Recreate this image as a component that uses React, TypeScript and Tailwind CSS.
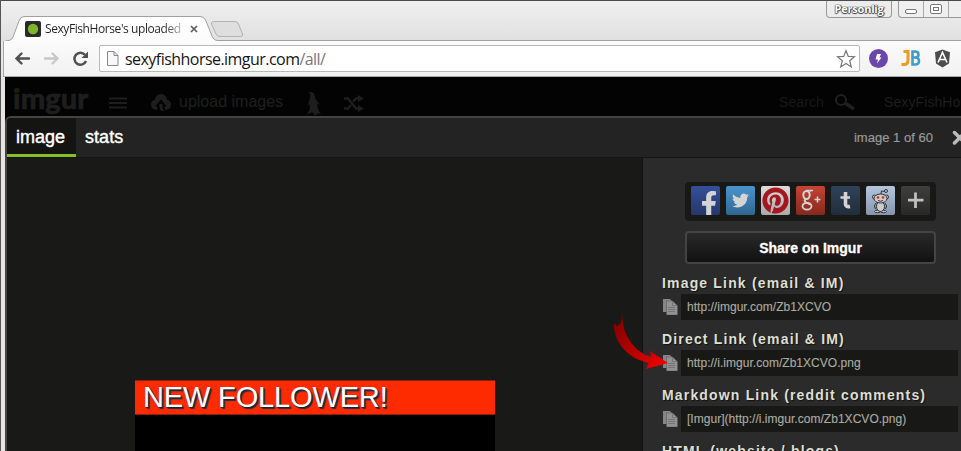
import React from "react";
import { FaFacebookF, FaTwitter, FaPinterest } from "react-icons/fa";

const arial = "font-['Liberation_Sans',Arial,sans-serif]";
const segoe = "font-['Open_Sans','Noto_Sans',sans-serif]";

function TabStrip() {
  return (
    <div className="relative h-[41px] shrink-0 bg-gradient-to-b from-[#f0f0f0] to-[#e0e0e0] border-t border-[#4d4a4d]">
      <svg className="absolute left-0 top-0" width="961" height="40" viewBox="0 1 961 40">
        <defs>
          <linearGradient id="tab" x1="0" y1="0" x2="0" y2="1">
            <stop offset="0" stopColor="#fff" />
            <stop offset="1" stopColor="#fbfbfb" />
          </linearGradient>
        </defs>
        <path d="M3.500 47V43Q4 40.500 8 40.500H9Q12 40 13 37L19 21Q20.500 16.500 24 16.500H200Q204 16.500 205.500 20L212 36Q213.500 40.500 218 40.500H965V47Z" fill="url(#tab)" stroke="#a0a0a0" />
        <path d="M215 21.500H235Q237.500 21.500 238.500 24L242.500 34Q243.500 36.500 240.500 36.500H220Q217 36.500 216 34L211.500 24Q210.700 21.500 215 21.500Z" fill="#dedede" stroke="#b2b2b2" />
        <rect x="25" y="21" width="16" height="16" rx="2" fill="#2a2a2a" />
        <circle cx="33" cy="29" r="5.200" fill="#7fb52a" />
        <path d="M191 26l6 6M197 26l-6 6" stroke="#5d5d5d" strokeWidth="1.700" />
      </svg>
      <div className={`absolute left-[45px] top-[19px] w-[138px] whitespace-nowrap bg-gradient-to-r from-[#222] from-85% to-[#ccc] bg-clip-text text-[12px] leading-[18px] tracking-[-0.42px] text-transparent ${segoe}`}>
        SexyFishHorse's uploaded
      </div>
      <div className="absolute right-0 top-0 flex h-[17px] gap-[6px]">
        <div className={`h-[17px] w-[66px] rounded-b-[4px] border border-t-0 border-[#999] bg-[#ececec] text-center text-[11px] font-bold leading-[16px] tracking-[-0.2px] text-white [text-shadow:0_0_1px_#333,0_0_1px_#333,0_1px_1px_#444,1px_0_1px_#444] ${segoe}`}>
          Personlig
        </div>
        <div className="flex w-[63px] rounded-bl-[4px] border-b border-l border-[#999] bg-[#efefef]">
          <svg width="62" height="16">
            <path d="M24.500 0v16M49.500 0v16" stroke="#aaa" />
            <rect x="6.500" y="8.500" width="11" height="4" rx="1.500" fill="#fff" stroke="#777" />
            <rect x="31.500" y="3.500" width="11" height="9" rx="1.500" fill="#fff" stroke="#777" />
            <rect x="34.500" y="6.500" width="5" height="3" fill="#fff" stroke="#777" />
          </svg>
        </div>
      </div>
    </div>
  );
}

function Toolbar() {
  return (
    <div className="ml-[3px] flex h-[36px] shrink-0 items-start border-b border-l border-b-[#aaa] border-l-[#a8a8a8] bg-gradient-to-b from-[#fbfbfb] to-[#f1f1f1] pt-[4px]">
      <svg className="shrink-0" width="95" height="28" viewBox="4 45 95 28" fill="none">
        <path d="M29 58.500H17M21.500 53.500L16.500 58.500L21.500 63.500" stroke="#505050" strokeWidth="2.400" strokeLinecap="round" />
        <path d="M45 58.500H57M52.500 53.500L57.500 58.500L52.500 63.500" stroke="#c8c8c8" strokeWidth="2.400" strokeLinecap="round" />
        <path d="M85 54.800A6 6 0 1 0 86 61" stroke="#505050" strokeWidth="2.500" />
        <path d="M88 51.500V58H81.500Z" fill="#505050" />
      </svg>
      <div className="flex h-[27px] w-[761px] shrink-0 items-center rounded-[2px] border border-[#b8b8b8] bg-white">
        <svg className="ml-[6px] shrink-0" width="14" height="17" viewBox="0 0 14 17">
          <path d="M1.500 1.500H8L12 5.500V15.500H1.500Z" fill="#f8f8f8" stroke="#888" />
          <path d="M8 1.500V5.500H12" fill="none" stroke="#888" />
        </svg>
        <div className={`ml-[5px] flex-1 whitespace-nowrap text-[16px] leading-[24px] tracking-[-0.54px] text-[#151515] ${segoe}`}>
          sexyfishhorse.imgur.com<span className="text-[#777]">/all/</span>
        </div>
        <svg className="mr-[3px]" width="20" height="20" viewBox="0 0 20 20">
          <path d="M10 1.500L12.300 7.400L18.500 7.700L13.700 11.700L15.300 18L10 14.500L4.700 18L6.300 11.700L1.500 7.700L7.700 7.400Z" fill="#fff" stroke="#777" strokeWidth="1.200" />
        </svg>
      </div>
      <svg className="shrink-0" width="101" height="28" viewBox="860 45 101 28">
        <circle cx="878.500" cy="58.500" r="9.500" fill="#6a47aa" />
        <path d="M877 54H881L879.500 57.500H881.500L877 63.500L878 59.500H875.500Z" fill="#fff" />
        <path d="M903.500 51.500H908V60Q908 64.500 904 64.500H901.500" fill="none" stroke="#ec9a20" strokeWidth="3" />
        <path d="M912.500 51.500H915Q918.500 51.500 918.500 54.500Q918.500 57.500 915 57.500H913.500H915.500Q919 57.500 919 61Q919 64.500 915 64.500H912.500Z" fill="none" stroke="#419ccc" strokeWidth="2.600" />
        <path d="M942.500 49.500L950 52.300L949 63.500L942.500 67.500L936 63.500L935 52.300Z" fill="#4c4c4c" />
        <path d="M938 62.500L942.500 52.500L947 62.500M939.800 59.500H945.200" fill="none" stroke="#fff" strokeWidth="1.600" />
      </svg>
    </div>
  );
}

function SiteHeader() {
  return (
    <div className={`flex h-[39px] shrink-0 overflow-hidden bg-[#030303] text-[#1e1e1e] ${arial}`}>
      <div className="relative ml-[8px] mt-[4px] w-[90px] shrink-0 font-['Lato',sans-serif] text-[29px] font-black leading-[34px] tracking-[0.1px] [-webkit-text-stroke:0.6px_#1e1e1e]">
        imgur
        <span className="absolute left-[1px] top-[7px] size-[5px] rounded-full bg-[#172002]" />
      </div>
      <svg className="shrink-0" width="72" height="39" viewBox="103 77 72 39" fill="#1e1e1e">
        <path d="M109 97.500H127V99.500H109ZM109 102H127V104H109ZM109 106.500H127V108.500H109Z" />
        <path d="M157 110Q151 109.500 151 104.500Q151 101 155 99.500Q156 94 161 94Q166 94 167 99.500Q171 101 171 104.500Q171 109.500 165 110L164.500 106.500H167L161 99.500L155 106.500H157.500Z" />
        <path d="M159.500 104H162.500V107Q162.500 110 165 111H161.500Q159.500 110 159.500 107Z" />
      </svg>
      <div className="mt-[15px] w-[126px] shrink-0 whitespace-nowrap pl-[4px] text-[16px] leading-[20px] [-webkit-text-stroke:0.2px_#1e1e1e]">upload images</div>
      <svg className="shrink-0" width="67" height="39" viewBox="301 77 67 39">
        <path d="M308 92.500L312 92L314.500 94L315 98L317 101L320 104.500L317 103.500L318 109L321 114.500L318 113L316.500 115H313L314.500 113L311 112.500L306.500 115L310 109L309.500 104L307.500 106L310 98L310.500 94Z" fill="#1e1e1e" />
        <path d="M344 98.500H348L356 108.500H359M344 108.500H348L351 105M353 101.500L356 98.500H359" fill="none" stroke="#1e1e1e" strokeWidth="2.500" />
        <path d="M358 95L364 98.500L358 102ZM358 105L364 108.500L358 112Z" fill="#1e1e1e" />
      </svg>
      <div className="ml-auto mt-[16px] text-[14px] leading-[18px] tracking-[0.1px] text-[#181818]">Search</div>
      <svg className="ml-[9px] shrink-0" width="28" height="39" viewBox="833 77 28 39">
        <circle cx="841" cy="100" r="5" fill="none" stroke="#202020" strokeWidth="2" />
        <path d="M845 103L854 109" stroke="#202020" strokeWidth="3.500" />
      </svg>
      <div className="ml-[23px] mt-[16px] w-[77px] shrink-0 whitespace-nowrap text-[14px] leading-[18px] tracking-[0.1px]">SexyFishHo</div>
    </div>
  );
}

function ShareIcons() {
  const tile = "flex size-[29px] items-center justify-center overflow-hidden rounded-[2px] text-[#d4d4d4]";
  return (
    <div className="flex h-[39px] w-[251px] gap-[6px] rounded-[4px] bg-[#181817] px-[6px] pt-[4px]">
      <div className={`${tile} items-end bg-gradient-to-b from-[#35509a] to-[#25376b] pl-[7px]`}><FaFacebookF size={26} className="translate-y-[2px]" /></div>
      <div className={`${tile} bg-gradient-to-b from-[#4a94cf] to-[#306792]`}><FaTwitter size={17} /></div>
      <div className={`${tile} bg-gradient-to-b from-[#ddd] to-[#aaa]`}><FaPinterest size={27} className="text-[#a31820]" /></div>
      <div className={`${tile} bg-gradient-to-b from-[#c74433] to-[#86281d]`}>
        <svg width="29" height="29" viewBox="0 0 29 29" fill="none" stroke="#d4d4d4">
          <ellipse cx="10.500" cy="9" rx="3.200" ry="4" strokeWidth="2" />
          <path d="M10 4.500H17M14 5.500L15 4.500" strokeWidth="1.300" />
          <path d="M10 13Q7.500 14.500 9.500 16L14 18.500" strokeWidth="2" />
          <ellipse cx="11" cy="20.200" rx="4.500" ry="3.400" strokeWidth="1.800" />
          <path d="M21.500 10.500V16.500M18.500 13.500H24.500" strokeWidth="1.600" />
        </svg>
      </div>
      <div className={`${tile} bg-gradient-to-b from-[#304359] to-[#202d3c]`}>
        <svg width="29" height="29" viewBox="0 0 29 29" fill="none" stroke="#d4d4d4">
          <path d="M14.500 6V18Q14.500 21.300 19 20.500" strokeWidth="3.600" />
          <path d="M9.500 11.500H19" strokeWidth="2.600" />
        </svg>
      </div>
      <div className={`${tile} bg-gradient-to-b from-[#b3c5df] to-[#8796ad]`}>
        <svg width="29" height="29" viewBox="0 0 29 29" fill="#ccc" stroke="#333" strokeWidth="1">
          <path d="M14.500 10L15.500 5L19.500 5.500" fill="none" />
          <circle cx="20" cy="5" r="1.500" />
          <circle cx="8.500" cy="11" r="2" /><circle cx="20.500" cy="11" r="2" />
          <path d="M10 17Q7 20 9.500 23M19 17Q22 20 19.500 23" fill="none" />
          <ellipse cx="11.500" cy="25.500" rx="3" ry="1.200" /><ellipse cx="17.500" cy="25.500" rx="3" ry="1.200" />
          <ellipse cx="14.500" cy="20.500" rx="4" ry="5" />
          <ellipse cx="14.500" cy="12.500" rx="6.500" ry="4.500" />
          <circle cx="12" cy="11.500" r="1.300" fill="#d22f20" stroke="none" /><circle cx="17" cy="11.500" r="1.300" fill="#d22f20" stroke="none" />
          <path d="M12 14.500Q14.500 16 17 14.500" fill="none" />
        </svg>
      </div>
      <div className={`${tile} bg-gradient-to-b from-[#3e3e3c] to-[#292928]`}>
        <svg width="29" height="29"><path d="M14.500 6.500V22M7 14.200H22.500" stroke="#c0c0c0" strokeWidth="2.800" /></svg>
      </div>
    </div>
  );
}

function CopyIcon() {
  return (
    <svg className="ml-px shrink-0" width="18" height="16" viewBox="0 0 18 16">
      <path d="M0 0H7L10 3V13H0Z" fill="#858585" />
      <path d="M3.500 2H9.500L14.500 6.500V16H3.500Z" fill="#929292" stroke="#555" strokeWidth="0.500" />
      <path d="M9.500 2.500V6.500H14" fill="none" stroke="#666" strokeWidth="0.600" />
      <path d="M5 8.500H12M5 10.500H12M5 12.500H12" stroke="#6d7178" strokeWidth="0.900" />
    </svg>
  );
}

function LinkRow({ label, value }: { label: string; value: string }) {
  return (
    <div className="h-[56px] shrink-0">
      <div className="h-[19px] whitespace-nowrap text-[14px] font-bold leading-[16px] tracking-[1.17px] text-[#dddfd2] [text-shadow:1px_1px_1px_#111]">{label}</div>
      <div className="flex h-[26px] items-center">
        <CopyIcon />
        <div className="h-[26px] w-[277px] bg-[#181816] pl-[6px] text-[12px] leading-[26px] tracking-[0.03px] text-[#aaaaa0] [-webkit-text-stroke:0.15px_#aaaaa0]">{value}</div>
      </div>
    </div>
  );
}

const links = [
  { label: "Image Link (email & IM)", value: "http://imgur.com/Zb1XCVO" },
  { label: "Direct Link (email & IM)", value: "http://i.imgur.com/Zb1XCVO.png" },
  { label: "Markdown Link (reddit comments)", value: "[Imgur](http://i.imgur.com/Zb1XCVO.png)" },
  { label: "HTML (website / blogs)", value: "" },
];

function Modal() {
  return (
    <div className={`relative flex min-h-0 flex-1 flex-col overflow-hidden rounded-tl-[6px] border-l-2 border-t-2 border-[#444] bg-[#191917] ${arial}`}>
      <div className="flex h-[39px] shrink-0 bg-[#232323] text-[18px] leading-[38px] text-white">
        <div className="w-[69px] border-b-[3px] border-[#85bf25] bg-[#141412] pl-[9px] [-webkit-text-stroke:0.4px_white]">image</div>
        <div className="pl-[9px] tracking-[0.05px] [-webkit-text-stroke:0.4px_white]">stats</div>
        <div className="ml-auto text-[13px] leading-[39px] tracking-[0.02px] text-[#999] [-webkit-text-stroke:0.2px_#999]">image 1 of 60</div>
        <svg className="ml-[19px]" width="9" height="39"><path d="M2.500 14.500L13 25M13 14.500L2.500 25" stroke="#bbb" strokeWidth="3.500" strokeLinecap="round" /></svg>
      </div>
      <div className="flex min-h-0 flex-1 border-t border-[#141414]">
        <div className="flex w-[635px] shrink-0 flex-col pl-[128px] pt-[222px]">
          <div className="h-[35px] w-[360px] shrink-0 border-y border-[#8a200f] bg-[#ff2b00] pl-[8px] text-[29px] leading-[33px] tracking-[-0.15px] text-white [text-shadow:1px_1px_1px_#123,2px_2px_1px_#234]">NEW FOLLOWER!</div>
          <div className="w-[360px] flex-1 bg-black" />
        </div>
        <div className="flex flex-1 flex-col overflow-hidden border-l border-[#111] bg-[#2b2b2b] pl-[19px]">
          <div className="ml-[23px] mt-[24px]"><ShareIcons /></div>
          <div className="mb-[11px] ml-[23px] mt-[10px] h-[33px] w-[251px] shrink-0 rounded-[4px] border-2 border-[#444] bg-gradient-to-b from-[#292929] to-[#121212] text-center text-[14px] font-bold leading-[30px] text-white [-webkit-text-stroke:0.3px_white]">Share on Imgur</div>
          {links.map((l) => <LinkRow key={l.label} {...l} />)}
        </div>
      </div>
      <svg className="absolute left-[605px] top-[193px]" width="64" height="64" viewBox="612 311 64 64">
        <defs>
          <linearGradient id="arrow" x1="0" y1="0" x2="1" y2="1">
            <stop offset="0" stopColor="#780000" />
            <stop offset=".7" stopColor="#cc0000" />
            <stop offset="1" stopColor="#f00" />
          </linearGradient>
        </defs>
        <path d="M622.500 311.500Q621.500 325 627 336Q635 352 651 357L650 351L668 363L646 369L648.500 363Q627 358 618 341Q613 330 614 323Q616 327 619 325Q622 323 622.500 311.500Z" fill="url(#arrow)" />
      </svg>
    </div>
  );
}

export default function App() {
  return (
    <div className="flex h-[451px] w-[961px] flex-col overflow-hidden border-l border-[#555] bg-[#e8e4e4]">
      <div className="-ml-px flex flex-col">
        <TabStrip />
        <Toolbar />
      </div>
      <div className="ml-[4px] flex min-h-0 flex-1 flex-col bg-[#030303]">
        <SiteHeader />
        <Modal />
      </div>
    </div>
  );
}
